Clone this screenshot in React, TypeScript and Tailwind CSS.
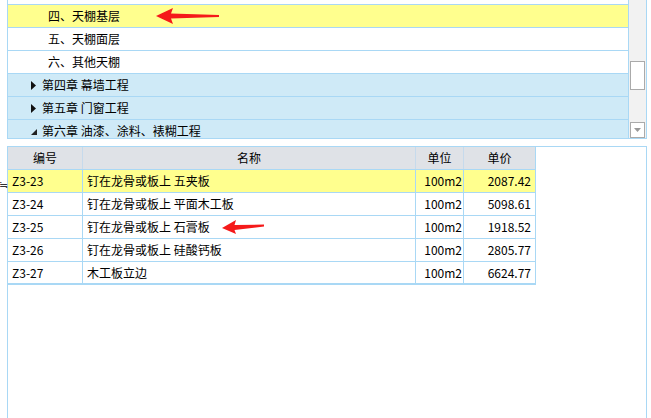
import React from "react";

const font = { fontFamily: '"Noto Sans CJK SC", "Noto Sans", sans-serif' };

const treeRows = [
  { label: "四、天棚基层", kind: "leaf", active: true },
  { label: "五、天棚面层", kind: "leaf" },
  { label: "六、其他天棚", kind: "leaf" },
  { label: "第四章 幕墙工程", kind: "closed" },
  { label: "第五章 门窗工程", kind: "closed" },
  { label: "第六章 油漆、涂料、裱糊工程", kind: "open" },
];

const items = [
  { code: "Z3-23", name: "钉在龙骨或板上 五夹板", unit: "100m2", price: "2087.42" },
  { code: "Z3-24", name: "钉在龙骨或板上 平面木工板", unit: "100m2", price: "5098.61" },
  { code: "Z3-25", name: "钉在龙骨或板上 石膏板", unit: "100m2", price: "1918.52" },
  { code: "Z3-26", name: "钉在龙骨或板上 硅酸钙板", unit: "100m2", price: "2805.77" },
  { code: "Z3-27", name: "木工板立边", unit: "100m2", price: "6624.77" },
];

export default function App() {
  return (
    <div className="w-[651px] h-[418px] bg-white overflow-hidden text-[12px] text-black" style={font}>
      <div className="pt-0 pl-[7px] pr-[4px]">
        {/* arbre */}
        <div className="flex h-[139px] border-l border-r border-b border-[#a9d8f5]">
          <div className="flex-1 flex flex-col overflow-hidden">
            <div className="h-[4px] bg-white shrink-0" />
            {treeRows.map((r, i) => (
              <div
                key={i}
                className={
                  "relative h-[23px] shrink-0 border-t border-[#a9d8f5] flex items-center " +
                  (r.active ? "bg-[#ffff8e]" : r.kind === "leaf" ? "bg-white" : "bg-[#cfeaf7]")
                }
              >
                {r.kind === "leaf" ? (
                  <span className="pl-[40px]">{r.label}</span>
                ) : (
                  <span className="pl-[22px] flex items-center">
                    {r.kind === "closed" ? (
                      <svg width="8" height="9" viewBox="0 0 8 9" className="mr-[4px]">
                        <path d="M1 0 L6 4.5 L1 9 Z" fill="#111" />
                      </svg>
                    ) : (
                      <svg width="8" height="9" viewBox="0 0 8 9" className="mr-[4px]">
                        <path d="M7 2 L7 8 L1 8 Z" fill="#222" />
                      </svg>
                    )}
                    {r.label}
                  </span>
                )}
                {r.active && (
                  <svg width="64" height="16" viewBox="0 0 64 16" className="absolute left-[148px] top-[3px]">
                    <path d="M0 8 L17 0 L15 5.5 L63 7 L63 9 L15 10.5 L17 16 Z" fill="#f51a1a" />
                  </svg>
                )}
              </div>
            ))}
          </div>
          <div className="w-[18px] border-l border-[#a9d8f5] bg-[#f2f2f2] relative">
            <div className="absolute left-[1px] top-[61px] w-[15px] h-[29px] bg-white border border-[#aaaaaa]" />
            <div className="absolute left-[1px] top-[122px] w-[15px] h-[16px] bg-white border border-[#aaaaaa] flex items-center justify-center">
              <svg width="7" height="4" viewBox="0 0 7 4">
                <path d="M0 0 L7 0 L3.5 4 Z" fill="#999" />
              </svg>
            </div>
          </div>
        </div>

        {/* liste des postes */}
        <div className="relative mt-[7px] h-[280px] border-l border-r border-t border-[#a9d8f5]">
          <span className="absolute -left-[9px] top-[29px] text-[11px] text-[#333]">≒</span>
          <div className="w-[528px]">
            <div className="flex h-[23px] bg-[#dfe2e7] border-b border-[#a9d8f5]">
              <div className="w-[75px] border-r border-[#c6daec] flex items-center justify-center">编号</div>
              <div className="w-[333px] border-r border-[#c6daec] flex items-center justify-center">名称</div>
              <div className="w-[48px] border-r border-[#c6daec] flex items-center justify-center">单位</div>
              <div className="w-[72px] border-r border-[#a9d8f5] flex items-center justify-center">单价</div>
            </div>
            {items.map((it, i) => (
              <div
                key={it.code}
                className={
                  "relative flex h-[23px] border-b border-[#a9d8f5] " +
                  (i === 0 ? "bg-[#ffff8e]" : "bg-white") +
                  (i === items.length - 1 ? " border-b-2" : "")
                }
              >
                <div className="w-[75px] border-r border-[#a9d8f5] flex items-center pl-[4px]">{it.code}</div>
                <div className="w-[333px] border-r border-[#a9d8f5] flex items-center pl-[4px]">{it.name}</div>
                <div className="w-[48px] border-r border-[#a9d8f5] flex items-center justify-end pr-[1px]">{it.unit}</div>
                <div className="w-[72px] border-r border-[#a9d8f5] flex items-center justify-end pr-[4px]">{it.price}</div>
                {i === 2 && (
                  <svg width="42" height="14" viewBox="0 0 42 14" className="absolute left-[214px] top-[4px]">
                    <path d="M0 8 L14 0 L12.5 5 L42 4.5 L42 6.5 L12.5 10 L14 14 Z" fill="#f51a1a" />
                  </svg>
                )}
              </div>
            ))}
          </div>
        </div>
      </div>
    </div>
  );
}
